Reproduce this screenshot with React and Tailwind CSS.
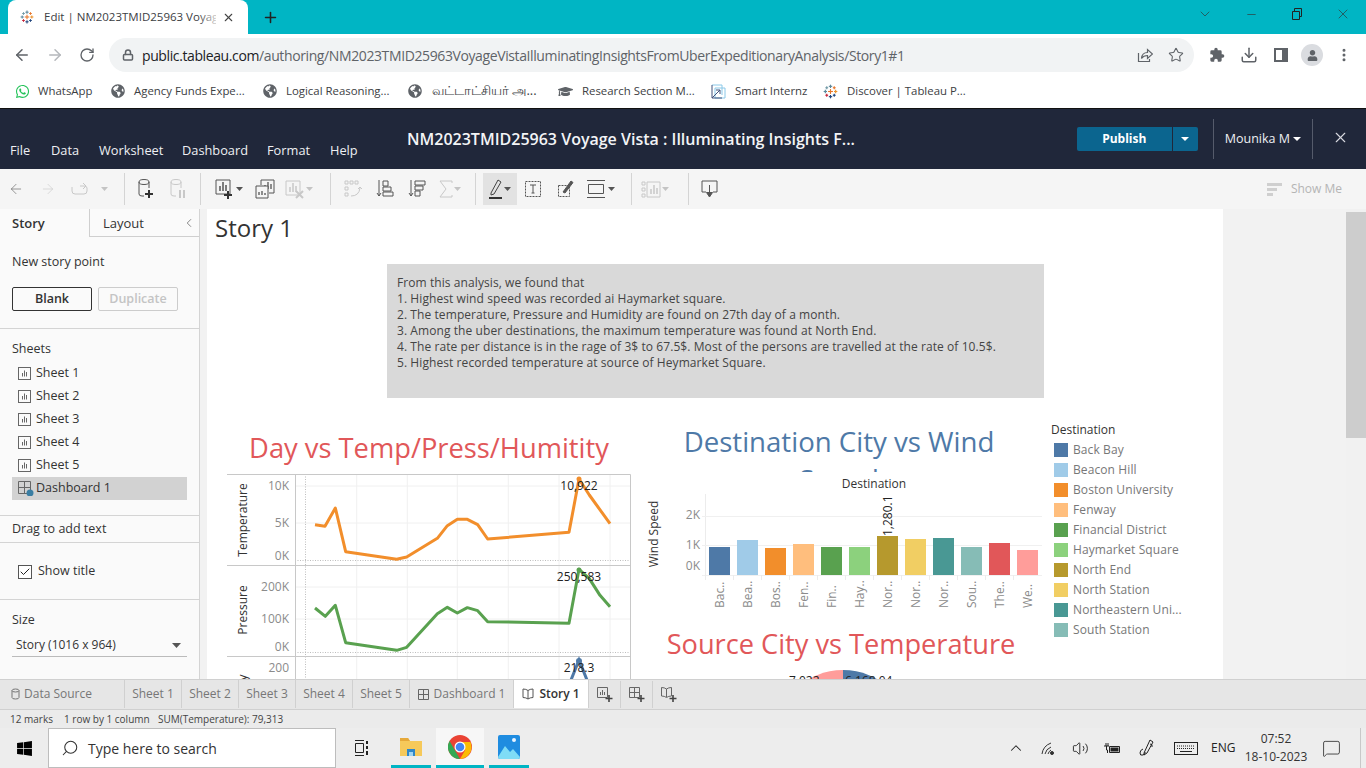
import React from "react";
import {
  ArrowLeft, ArrowRight, RotateCw, Lock, Star, Download, MoreVertical, Plus, X, Minus, ChevronDown,
  ChevronLeft, Check, Search, ChevronUp, Volume2, MessageSquare,
} from "lucide-react";
import { FaWhatsapp, FaGlobeAmericas, FaGraduationCap, FaUser, FaWindows } from "react-icons/fa";

const chromeFont = { fontFamily: '"Open Sans", "Noto Sans CJK SC", sans-serif' };

function TableauLogo({ size = 16 }) {
  const cross = (x, y, r, c) => (
    <g stroke={c} strokeWidth="1.2" key={`${x}-${y}`}>
      <line x1={x - r} y1={y} x2={x + r} y2={y} />
      <line x1={x} y1={y - r} x2={x} y2={y + r} />
    </g>
  );
  return (
    <svg width={size} height={size} viewBox="0 0 16 16">
      {cross(8, 8, 2.6, "#e8762b")}
      {cross(8, 2.5, 1.8, "#5b879b")}
      {cross(8, 13.5, 1.8, "#1f447c")}
      {cross(2.5, 8, 1.8, "#59879b")}
      {cross(13.5, 8, 1.8, "#eb912b")}
      {cross(4, 4, 1.5, "#7099a6")}
      {cross(12, 4, 1.5, "#e8762b")}
      {cross(4, 12, 1.5, "#c72035")}
      {cross(12, 12, 1.5, "#1f447c")}
    </svg>
  );
}

function BarGlyph({ className = "" }) {
  return (
    <svg width="13" height="13" viewBox="0 0 13 13" className={className} fill="none" stroke="#666">
      <rect x="0.5" y="0.5" width="12" height="12" />
      <path d="M4.5 9.5V6M6.5 9.5V3.5M8.5 9.5V5" />
    </svg>
  );
}

function Sep() {
  return <div className="w-px h-[32px] bg-[#d4d4d4]" />;
}

function Caret({ dim }) {
  return (
    <svg width="7" height="4" viewBox="0 0 7 4" className="ml-[1px] mt-[1px]">
      <path d="M0 0h7L3.5 4z" fill={dim ? "#c4c4c4" : "#555"} />
    </svg>
  );
}

function Tool({ children, w = "w-[32px]" }) {
  return <div className={`${w} h-[32px] flex items-center justify-center shrink-0`}>{children}</div>;
}

function Ico({ children, w = 20, h = 20 }) {
  return (
    <svg width={w} height={h} viewBox={`0 0 ${w} ${h}`} fill="none" stroke="currentColor" strokeWidth="1">
      {children}
    </svg>
  );
}

function Toolbar() {
  return (
    <div className="h-[40px] bg-[#f5f5f5] flex items-center relative text-[#555]">
      <Tool><ArrowLeft size={16} strokeWidth={1} className="text-[#666]" /></Tool>
      <Tool><ArrowRight size={16} strokeWidth={1} className="text-[#ccc]" /></Tool>
      <Tool>
        <Ico w={18} h={14}>
          <path d="M1 5v4q0 3 3 3h9q3 0 3-3V6q0-2-3-2H9" stroke="#c8c8c8" />
          <path d="M12 1l3 3-3 3" stroke="#c8c8c8" />
        </Ico>
      </Tool>
      <div className="w-[16px] flex justify-center"><Caret dim /></div>
      <div className="ml-[12px]"><Sep /></div>
      <div className="ml-[5px]" />
      <Tool>
        <Ico w={18} h={22}>
          <ellipse cx="7" cy="4" rx="5" ry="2.5" />
          <path d="M2 4v12q0 2 3 2h2M12 4v6" />
          <path d="M12 12v8M8 16h8" stroke="#333" strokeWidth="2" />
        </Ico>
      </Tool>
      <Tool>
        <Ico w={18} h={22}>
          <g stroke="#c8c8c8">
            <ellipse cx="7" cy="4" rx="5" ry="2.5" />
            <path d="M2 4v12q0 2 3 2h2M12 4v6" />
            <path d="M11 12v8M15 12v8" strokeWidth="2" />
          </g>
        </Ico>
      </Tool>
      <div className="ml-[6px]"><Sep /></div>
      <div className="ml-[8px]" />
      <Tool w="w-[40px]">
        <Ico w={20} h={22}>
          <path d="M1 2h14v14H1z" />
          <path d="M5 13V8M8 13V4M11 13V7" strokeWidth="1.5" />
          <path d="M13 13v8M9 17h8" stroke="#333" strokeWidth="2" />
        </Ico>
        <Caret />
      </Tool>
      <Tool>
        <Ico w={20} h={20}>
          <path d="M6 6V1h13v13h-5" />
          <path d="M10 10V6M13 10V3M16 10V5" strokeWidth="1.3" />
          <path d="M1 7h12v12H1z" fill="#f5f5f5" />
          <path d="M4 16v-3M7 16v-4M10 16v-2" strokeWidth="1.3" />
        </Ico>
      </Tool>
      <Tool w="w-[36px]">
        <Ico w={20} h={20}>
          <g stroke="#c8c8c8">
            <path d="M1 2h14v14H1z" />
            <path d="M5 13V8M8 13V4M11 13V7" strokeWidth="1.5" />
            <path d="M11 12l7 7M18 12l-7 7" strokeWidth="2" />
          </g>
        </Ico>
        <Caret dim />
      </Tool>
      <div className="ml-[13px]"><Sep /></div>
      <div className="ml-[6px]" />
      <Tool>
        <Ico w={20} h={20}>
          <g stroke="#c8c8c8">
            <path d="M2 2h3v3H2zM7 2h3v3H7zM12 2h3v3h-3zM2 8h3v3H2zM2 14h3v3H2z" />
            <path d="M8 17q8 0 9-8M15 10l2-2 2 2" />
          </g>
        </Ico>
      </Tool>
      <Tool>
        <Ico w={18} h={20}>
          <path d="M3 1v16M1 14l2 3 2-3" />
          <path d="M7 2h5v5H7zM7 8h8v4H7zM7 13h10v4H7z" />
        </Ico>
      </Tool>
      <Tool>
        <Ico w={18} h={20}>
          <path d="M3 1v16M1 14l2 3 2-3" />
          <path d="M7 2h10v4H7zM7 7h8v4H7zM7 12h5v5H7z" />
        </Ico>
      </Tool>
      <Tool w="w-[34px]">
        <Ico w={14} h={18}>
          <path d="M13 3V1H1l6 8-6 8h12v-2" stroke="#c8c8c8" />
        </Ico>
        <Caret dim />
      </Tool>
      <div className="ml-[8px]"><Sep /></div>
      <div className="ml-[7px] w-[34px] h-[32px] bg-[#e2e2e2] flex items-center justify-center text-[#444]">
        <Ico w={14} h={22}>
          <path d="M2 15L9 2l3 2-7 12-3 1z" />
          <path d="M0 20h13" stroke="#333" strokeWidth="2" />
        </Ico>
        <Caret />
      </div>
      <Tool>
        <Ico w={18} h={18}>
          <path d="M1.5 1.5h15v15h-15z" strokeDasharray="2 1" />
          <path d="M6 5h6M9 5v8M7.5 13h3" />
        </Ico>
      </Tool>
      <Tool w="w-[34px]">
        <Ico w={18} h={18}>
          <path d="M1.5 5.5h11v11h-11z" strokeDasharray="2 1" />
          <path d="M6 12L14 1l2 1.5L8 13z" fill="#555" />
        </Ico>
      </Tool>
      <Tool w="w-[36px]">
        <Ico w={20} h={20}>
          <path d="M0 1.5h18M0 18.5h18M1.5 5.5h15v9h-15z" />
        </Ico>
        <Caret />
      </Tool>
      <div className="ml-[12px]"><Sep /></div>
      <div className="ml-[4px]" />
      <Tool w="w-[38px]">
        <Ico w={20} h={18}>
          <g stroke="#c8c8c8">
            <path d="M1 2h3v3H1zM1 8h3v3H1zM1 14h3v3H1z" />
            <path d="M6 2h13v15H6z" />
            <path d="M10 14V9M13 14V5M16 14V8" strokeWidth="1.5" />
          </g>
        </Ico>
        <Caret dim />
      </Tool>
      <div className="ml-[14px]"><Sep /></div>
      <div className="ml-[5px]" />
      <Tool>
        <Ico w={18} h={18}>
          <path d="M5 12H1V1h15v11h-4" />
          <path d="M8.5 5v9" />
          <path d="M5.5 12.5h6L8.5 17z" fill="#555" />
        </Ico>
      </Tool>
      <div className="ml-auto mr-[24px] pt-[1px] flex items-center gap-[8px] text-[12px] text-[#b4b4b4]">
        <svg width="16" height="16" viewBox="0 0 16 16" fill="#cfcfcf">
          <rect x="0" y="2" width="15" height="3" />
          <rect x="0" y="7" width="10" height="3" />
          <rect x="0" y="12" width="6" height="3" />
        </svg>
        Show Me
      </div>
    </div>
  );
}

function ChromeTop() {
  return (
    <div style={chromeFont}>
      <div className="h-[34px] bg-[#00b5c4] flex items-end relative pl-[8px]">
        <div className="w-[240px] h-[34px] bg-white rounded-t-[8px] flex items-center pl-[12px] relative">
          <TableauLogo size={14} />
          <span className="ml-[10px] text-[11.5px] text-[#3c4043] w-[172px] overflow-hidden whitespace-nowrap">
            Edit | NM2023TMID25963 Voyage Vista
          </span>
          <div className="absolute left-[190px] top-0 w-[24px] h-full bg-gradient-to-r from-transparent to-white" />
          <X size={13} strokeWidth={2} className="ml-[6px] text-[#444]" />
        </div>
        <Plus size={17} strokeWidth={2.2} className="ml-[14px] mb-[8px] text-[#222]" />
        <div className="ml-auto h-[34px] flex items-start text-[#333]">
          <Tool w="w-[46px]"><ChevronDown size={16} strokeWidth={1} className="-mt-[4px]" /></Tool>
          <Tool w="w-[46px]"><Minus size={13} strokeWidth={1.2} className="-mt-[4px]" /></Tool>
          <Tool w="w-[46px]">
            <svg width="12" height="12" viewBox="0 0 12 12" fill="none" stroke="#222" className="-mt-[4px]">
              <path d="M1.5 3.5h7v8h-7zM3.5 3.5v-3h7v8h-2" />
            </svg>
          </Tool>
          <Tool w="w-[46px]"><X size={16} strokeWidth={1} className="-mt-[4px]" /></Tool>
        </div>
      </div>
      <div className="h-[42px] bg-white flex items-center text-[#5f6368]">
        <ArrowLeft size={18} strokeWidth={2} className="ml-[13px]" />
        <ArrowRight size={18} strokeWidth={2} className="ml-[15px] text-[#b5b8bc]" />
        <RotateCw size={16} strokeWidth={2} className="ml-[15px]" />
        <div className="ml-[14px] w-[1085px] h-[34px] rounded-full bg-[#f1f3f4] flex items-center pl-[13px]">
          <Lock size={12} strokeWidth={3} className="text-[#5f6368]" />
          <span className="ml-[8px] text-[14px] whitespace-nowrap text-[#5f6368] tracking-[-0.39px]">
            <span className="text-[#202124]">public.tableau.com</span>
            /authoring/NM2023TMID25963VoyageVistaIlluminatingInsightsFromUberExpeditionaryAnalysis/Story1#1
          </span>
          <div className="ml-auto mr-[10px] flex items-center gap-[15px]">
            <svg width="16" height="16" viewBox="0 0 16 16" fill="none" stroke="#5f6368" strokeWidth="1.2">
              <path d="M1.500 6v8.500h11V12" />
              <path d="M4.500 11.500q0.500-6 6-6V2.500l5 4.500-5 4.500V8.500q-4 0-6 3z" />
            </svg>
            <Star size={16} strokeWidth={1.6} />
          </div>
        </div>
        <svg width="16" height="16" viewBox="0 0 24 24" fill="#5f6368" className="ml-[15px]">
          <path d="M20.500 11H19V7a2 2 0 0 0-2-2h-4V3.500a2.500 2.500 0 0 0-5 0V5H4a2 2 0 0 0-2 2v3.800h1.500a2.700 2.700 0 0 1 0 5.400H2V20a2 2 0 0 0 2 2h3.800v-1.500a2.700 2.700 0 0 1 5.400 0V22H17a2 2 0 0 0 2-2v-4h1.500a2.500 2.500 0 0 0 0-5z" />
        </svg>
        <Download size={18} strokeWidth={2} className="ml-[15px]" />
        <svg width="14" height="14" viewBox="0 0 14 14" className="ml-[16px]">
          <path d="M1 1h12v12H1z" fill="none" stroke="#5f6368" strokeWidth="2" />
          <rect x="8" y="1" width="5" height="12" fill="#5f6368" />
        </svg>
        <div className="ml-[13px] w-[22px] h-[22px] rounded-full bg-[#dadce0] flex items-center justify-center">
          <FaUser size={11} className="text-[#5f6368]" />
        </div>
        <MoreVertical size={16} strokeWidth={2.5} className="ml-[13px]" />
      </div>
      <div className="h-[32px] bg-white flex items-center pl-[15px] pb-[2px] text-[11.4px] text-[#3c4043] whitespace-nowrap">
        <FaWhatsapp size={15} className="text-[#25c35a]" />
        <span className="ml-[8px] w-[73px]">WhatsApp</span>
        <FaGlobeAmericas size={14} className="text-[#5f6368]" />
        <span className="ml-[9px] w-[129px]">Agency Funds Expe...</span>
        <FaGlobeAmericas size={14} className="text-[#5f6368]" />
        <span className="ml-[9px] w-[122px]">Logical Reasoning...</span>
        <FaGlobeAmericas size={14} className="text-[#5f6368]" />
        <span className="ml-[10px] w-[126px] text-[13px]">வட்டாட்சியர் அ...</span>
        <FaGraduationCap size={15} className="text-[#5f6368]" />
        <span className="ml-[9px] w-[129px]">Research Section M...</span>
        <svg width="15" height="16" viewBox="0 0 15 16" fill="none">
          <path d="M1 2h10v10" stroke="#8ac8e8" />
          <path d="M4 5h10v10H4z" stroke="#8ac8e8" />
          <path d="M1 2v13h10M1 15l8-8M5 7h4v4" stroke="#40507a" />
        </svg>
        <span className="ml-[9px] w-[88px]">Smart Internz</span>
        <TableauLogo size={15} />
        <span className="ml-[9px]">Discover | Tableau P...</span>
      </div>
    </div>
  );
}

function AppHeader() {
  const menu = [
    ["File", "w-[41px]"],
    ["Data", "w-[48px]"],
    ["Worksheet", "w-[83px]"],
    ["Dashboard", "w-[85px]"],
    ["Format", "w-[63px]"],
    ["Help", "w-[40px]"],
  ];
  return (
    <div className="h-[61px] bg-[#20273a] border-t border-[#111] flex text-white relative">
      <div className="flex items-end pl-[10px] pb-[9px] text-[12.8px] text-[#eef0f3]">
        {menu.map(([m, w]) => (
          <span key={m} className={w}>{m}</span>
        ))}
      </div>
      <div className="ml-[37px] pt-[18px] text-[16px] font-semibold text-[#f3f4f6] whitespace-nowrap">
        NM2023TMID25963 Voyage Vista : Illuminating Insights F...
      </div>
      <div className="ml-auto flex items-start pt-[18px] pr-[15px]">
        <div className="h-[24px] w-[95px] bg-[#0b658f] flex items-center justify-center text-[12px] font-bold rounded-l-[2px]">
          Publish
        </div>
        <div className="h-[24px] w-[25px] ml-px bg-[#0b658f] flex items-center justify-center rounded-r-[2px]">
          <svg width="8" height="4" viewBox="0 0 8 4"><path d="M0 0h8L4 4z" fill="#fff" /></svg>
        </div>
        <div className="ml-[15px] -mt-[8px] w-px h-[40px] bg-[#555b6b]" />
        <div className="ml-[11px] mt-[3px] text-[12.5px] flex items-center gap-[3px] whitespace-nowrap text-[#eef0f3]">
          Mounika M
          <svg width="8" height="4" viewBox="0 0 8 4"><path d="M0 0h8L4 4z" fill="#fff" /></svg>
        </div>
        <div className="ml-[11px] -mt-[8px] w-px h-[40px] bg-[#555b6b]" />
        <X size={17} strokeWidth={1.6} className="ml-[19px] mt-[2px] mr-[2px] text-[#d8dae0]" />
      </div>
    </div>
  );
}

function Sidebar() {
  const sheets = ["Sheet 1", "Sheet 2", "Sheet 3", "Sheet 4", "Sheet 5"];
  return (
    <div className="w-[200px] shrink-0 h-full bg-[#fafafa] border-r border-[#d4d4d4] text-[12.5px] text-[#333] overflow-hidden">
      <div className="h-[28px] flex">
        <div className="w-[89px] pl-[12px] pt-[5px] font-semibold text-[13px]">Story</div>
        <div className="flex-1 border-l border-b border-[#cfcfcf] pl-[13px] pt-[5px] text-[13px] relative">
          Layout
          <ChevronLeft size={14} strokeWidth={1.2} className="absolute right-[3px] top-[7px] text-[#555]" />
        </div>
      </div>
      <div className="h-[92px] border-b border-[#d4d4d4] px-[12px] pt-[16px]">
        <div className="leading-[17px]">New story point</div>
        <div className="flex gap-[6px] mt-[17px]">
          <div className="w-[80px] h-[24px] border border-[#333] rounded-[2px] pt-[1px] flex items-center justify-center font-semibold">
            Blank
          </div>
          <div className="w-[80px] h-[24px] border border-[#ccc] rounded-[2px] pt-[1px] flex items-center justify-center font-semibold text-[#c4c4c4]">
            Duplicate
          </div>
        </div>
      </div>
      <div className="h-[187px] border-b border-[#d4d4d4] pt-[11px]">
        <div className="pl-[12px] leading-[17px]">Sheets</div>
        <div className="mt-[5px]">
          {sheets.map((s) => (
            <div key={s} className="h-[23px] flex items-center pl-[18px] gap-[5px]">
              <BarGlyph />
              {s}
            </div>
          ))}
          <div className="ml-[12px] w-[175px] h-[23px] bg-[#d2d2d2] flex items-center pl-[6px] gap-[2px] relative">
            <svg width="16" height="15" viewBox="0 0 16 15" fill="none" stroke="#666">
              <path d="M0.500 0.500h12v12h-12zM6.500 0.500v12M0.500 6.500h12" />
              <circle cx="12" cy="12" r="3.500" fill="#3a7ea3" stroke="none" />
            </svg>
            Dashboard 1
          </div>
        </div>
      </div>
      <div className="h-[27px] border-b border-[#d4d4d4] pl-[12px] pt-[2px] flex items-center">Drag to add text</div>
      <div className="h-[57px] border-b border-[#d4d4d4] pl-[18px] pt-[2px] flex items-center gap-[6px]">
        <div className="w-[14px] h-[14px] border border-[#555] flex items-center justify-center bg-white">
          <Check size={12} strokeWidth={2} className="text-[#222]" />
        </div>
        Show title
      </div>
      <div className="pt-[11px] px-[12px]">
        <div className="leading-[17px]">Size</div>
        <div className="mt-[7px] w-[175px] h-[22px] border-b border-[#bbb] pl-[4px] pr-[6px] flex items-center justify-between text-[12px]">
          Story (1016 x 964)
          <svg width="9" height="5" viewBox="0 0 9 5"><path d="M0 0h9L4.500 5z" fill="#555" /></svg>
        </div>
      </div>
    </div>
  );
}

const toLine = (arr) => arr.map(([x, y]) => `${210 + x / 3},${430 + y / 3}`).join(" ");

const tempPts = [[315,284],[345,289],[376,234],[407,365],[560,388],[590,381],[682,325],[712,287],[742,268],[772,268],[803,284],[833,327],[1077,307],[1107,147],[1138,195],[1200,281]];
const pressPts = [[315,534],[346,559],[376,526],[407,638],[560,661],[590,652],[682,551],[712,532],[742,549],[772,533],[803,542],[833,575],[1077,580],[1107,418],[1138,446],[1170,496],[1200,530]];

function LineCharts() {
  const vgrid = [356.7, 407.3, 457.3, 508.3, 559, 610];
  const tick = { fontSize: 12, fill: "#8b8b8b", textAnchor: "end" };
  const axis = { fontSize: 12, fill: "#333", textAnchor: "middle" };
  return (
    <svg width="404" height="206" viewBox="227 474 404 206" className="block ml-[20px]" style={{ fontFamily: '"Open Sans", sans-serif' }}>
      {vgrid.map((x) => (
        <line key={x} x1={x} x2={x} y1="474" y2="680" stroke="#f0f0f0" />
      ))}
      {[486, 523, 587, 619].map((y) => (
        <line key={y} x1="295" x2="630" y1={y} y2={y} stroke="#f0f0f0" />
      ))}
      <line x1="305.500" x2="305.500" y1="474" y2="680" stroke="#bdbdbd" strokeDasharray="1 1.500" />
      <line x1="295" x2="630" y1="560.500" y2="560.500" stroke="#bdbdbd" strokeDasharray="1 1.500" />
      <line x1="295" x2="630" y1="652.500" y2="652.500" stroke="#bdbdbd" strokeDasharray="1 1.500" />
      <path d="M227 474.500H630.500V680M227 565.500H630M227 656.500H630M295.500 474V680" fill="none" stroke="#c8c8c8" />
      <text x="289" y="490" {...tick}>10K</text>
      <text x="289" y="527" {...tick}>5K</text>
      <text x="289" y="560" {...tick}>0K</text>
      <text x="289" y="591" {...tick}>200K</text>
      <text x="289" y="623" {...tick}>100K</text>
      <text x="289" y="651" {...tick}>0K</text>
      <text x="289" y="672" {...tick}>200</text>
      <text transform="translate(247 520) rotate(-90)" {...axis}>Temperature</text>
      <text transform="translate(247 610) rotate(-90)" {...axis}>Pressure</text>
      <text transform="translate(247 700) rotate(-90)" {...axis}>Humidity</text>
      <polyline points={toLine(tempPts)} fill="none" stroke="#f28e2b" strokeWidth="3" strokeLinejoin="round" />
      <circle cx="579" cy="479" r="2.500" fill="#f28e2b" />
      <polyline points={toLine(pressPts)} fill="none" stroke="#59a14f" strokeWidth="3" strokeLinejoin="round" />
      <circle cx="579" cy="570" r="2.500" fill="#59a14f" />
      <polyline points="571,680 579,660 587,680" fill="none" stroke="#4e79a7" strokeWidth="3" />
      <circle cx="579" cy="661" r="3" fill="#4e79a7" />
      <text x="579" y="490" fontSize="12" fill="#222" textAnchor="middle">10,922</text>
      <text x="579" y="581" fontSize="12" fill="#222" textAnchor="middle">250,583</text>
      <text x="579" y="672" fontSize="12" fill="#222" textAnchor="middle">218.3</text>
    </svg>
  );
}

const cities = [
  { label: "Bac..", legend: "Back Bay", color: "#4e79a7", top: 381 },
  { label: "Bea..", legend: "Beacon Hill", color: "#a0cbe8", top: 360 },
  { label: "Bos..", legend: "Boston University", color: "#f28e2b", top: 384 },
  { label: "Fen..", legend: "Fenway", color: "#ffbe7d", top: 372 },
  { label: "Fin..", legend: "Financial District", color: "#59a14f", top: 381 },
  { label: "Hay..", legend: "Haymarket Square", color: "#8cd17d", top: 381 },
  { label: "Nor..", legend: "North End", color: "#b6992d", top: 348 },
  { label: "Nor..", legend: "North Station", color: "#f1ce63", top: 357 },
  { label: "Nor..", legend: "Northeastern Uni...", color: "#499894", top: 354 },
  { label: "Sou..", legend: "South Station", color: "#86bcb6", top: 381 },
  { label: "The..", legend: "The Fens", color: "#e15759", top: 369 },
  { label: "We..", legend: "West End", color: "#ff9d9a", top: 390 },
];

function BarChart() {
  return (
    <svg width="405" height="140" viewBox="640 477 405 140" className="block mt-[5px]" style={{ fontFamily: '"Open Sans", sans-serif' }}>
      <text x="875" y="488" fontSize="12" fill="#333" textAnchor="middle">Destination</text>
      <line x1="706.500" x2="706.500" y1="494" y2="575" stroke="#ececec" />
      {[516, 545, 575].map((y) => (
        <line key={y} x1="703" x2="1043" y1={y + 0.500} y2={y + 0.500} stroke="#f0f0f0" />
      ))}
      <text x="701" y="519" fontSize="12" fill="#8b8b8b" textAnchor="end">2K</text>
      <text x="701" y="549" fontSize="12" fill="#8b8b8b" textAnchor="end">1K</text>
      <text x="701" y="570" fontSize="12" fill="#8b8b8b" textAnchor="end">0K</text>
      <text transform="translate(659 534) rotate(-90)" fontSize="12" fill="#333" textAnchor="middle">Wind Speed</text>
      {cities.map((c, i) => {
        const x = 710 + i * 28;
        const y = 420 + c.top / 3;
        return (
          <g key={c.legend}>
            <rect x={x} y={y} width="21" height={575 - y} fill={c.color} />
            <line x1={x - 3.500} x2={x - 3.500} y1="575" y2="580" stroke="#ececec" />
            <text transform={`translate(${x + 15} 608) rotate(-90)`} fontSize="12" fill="#8b8b8b">{c.label}</text>
          </g>
        );
      })}
      <text transform="translate(893 536) rotate(-90)" fontSize="12" fill="#222">1,280.1</text>
    </svg>
  );
}

function Legend() {
  return (
    <div className="pl-[3px] pt-[22px] h-[245px] overflow-hidden text-[12px] leading-[20px] whitespace-nowrap">
      <div className="text-[#333] -ml-[3px]">Destination</div>
      {cities.slice(0, 10).map((c) => (
        <div key={c.legend} className="h-[20px] flex items-center gap-[5px] text-[#777] tracking-[0.1px]">
          <div className="w-[14px] h-[14px] shrink-0" style={{ backgroundColor: c.color }} />
          {c.legend}
        </div>
      ))}
      <div className="mt-[3px] w-[14px] h-[2px] border-t border-x border-[#e15759]" />
    </div>
  );
}

function Story() {
  const notes = [
    "From this analysis, we found that",
    "1. Highest wind speed was recorded ai Haymarket square.",
    "2. The temperature, Pressure and Humidity are found on 27th day of a month.",
    "3. Among the uber destinations, the maximum temperature was found at North End.",
    "4. The rate per distance is in the rage of 3$ to 67.5$. Most of the persons are travelled at the rate of 10.5$.",
    "5. Highest recorded temperature at source of Heymarket Square.",
  ];
  return (
    <div className="w-[1016px] ml-[7px] h-full bg-white overflow-hidden shrink-0" style={{ fontFamily: '"Open Sans", sans-serif' }}>
      <div className="pl-[8px] pt-[3px] h-[55px] text-[24px] leading-[32px] text-[#333]">Story 1</div>
      <div className="ml-[180px] w-[657px] h-[134px] bg-[#d9d9d9] pl-[10px] pt-[11px] text-[12px] leading-[16px] tracking-[0.08px] text-[#444] whitespace-nowrap">
        {notes.map((n) => (
          <div key={n}>{n}</div>
        ))}
      </div>
      <div className="flex">
        <div className="w-[432px] shrink-0 pt-[30px]">
          <div className="ml-[20px] w-[404px] text-center text-[27.3px] leading-[40px] h-[46px] text-[#e15759] whitespace-nowrap">
            Day vs Temp/Press/Humitity
          </div>
          <LineCharts />
        </div>
        <div className="w-[412px] shrink-0">
          <div className="h-[74px] pt-[24px] overflow-hidden">
            <div className="ml-[30px] w-[340px] text-center text-[27.6px] leading-[38px] text-[#4e79a7]">
              Destination City vs Wind Speed
            </div>
          </div>
          <BarChart />
          <div className="w-[404px] text-center text-[27.2px] leading-[36px] mt-[9px] text-[#e15759] whitespace-nowrap">
            Source City vs Temperature
          </div>
          <div className="relative h-[20px] mt-[8px]">
            <svg width="404" height="20" viewBox="637 670 404 20" className="block">
              <path d="M841 670a68 68 0 0 0-68 68h68z" fill="#ff9d9a" />
              <path d="M841 670a68 68 0 0 1 68 68h-68z" fill="#4e79a7" />
            </svg>
            <span className="absolute left-[150px] top-[3px] text-[12px] leading-[16px] text-[#222]">7,022</span>
            <span className="absolute left-[206px] top-[3px] text-[12px] leading-[16px] text-[#222]">6,168.04</span>
          </div>
        </div>
        <div className="flex-1"><Legend /></div>
      </div>
    </div>
  );
}

function BottomTabs() {
  const sheets = ["Sheet 1", "Sheet 2", "Sheet 3", "Sheet 4", "Sheet 5"];
  return (
    <div style={chromeFont}>
      <div className="h-[31px] bg-[#e6e6e6] border-t border-b border-[#d0d0d0] flex text-[12px] text-[#777] pb-[1px]">
        <div className="w-[125px] pl-[11px] flex items-center gap-[4px] border-r border-[#d0d0d0]">
          <svg width="9" height="12" viewBox="0 0 9 12" fill="none" stroke="#777">
            <ellipse cx="4.500" cy="2.500" rx="3.500" ry="1.500" />
            <path d="M1 2.500v7q0 1.500 3.500 1.500T8 9.500v-7" />
          </svg>
          Data Source
        </div>
        {sheets.map((s) => (
          <div key={s} className="w-[57px] flex items-center justify-center border-r border-[#d0d0d0]">{s}</div>
        ))}
        <div className="w-[104px] flex items-center justify-center gap-[5px] border-r border-[#d0d0d0]">
          <svg width="11" height="11" viewBox="0 0 11 11" fill="none" stroke="#666">
            <path d="M0.500 0.500h10v10h-10zM5.500 0.500v10M0.500 5.500h10" />
          </svg>
          Dashboard 1
        </div>
        <div className="w-[75px] bg-white flex items-center justify-center gap-[5px] text-[#333] font-semibold border-r border-[#d0d0d0]">
          <svg width="12" height="12" viewBox="0 0 12 12" fill="none" stroke="#555">
            <path d="M6 2.500Q4 1 1 1v8.500q3 0 5 1.500 2-1.500 5-1.500V1Q8 1 6 2.500zM6 2.500V11" />
          </svg>
          Story 1
        </div>
        {[0, 1, 2].map((i) => (
          <div key={i} className="w-[32px] mt-[1px] flex items-center justify-center border-r border-[#d0d0d0] last:border-r-0">
            <svg width="16" height="16" viewBox="0 0 16 16" fill="none" stroke="#666">
              {i === 0 && <path d="M0.500 0.500h10v10h-10zM3.500 8V5M5.500 8V3M7.500 8V5" />}
              {i === 1 && <path d="M0.500 0.500h10v10h-10zM5.500 0.500v10M0.500 5.500h10" />}
              {i === 2 && <path d="M5.500 2Q3.500 0.500 0.500 0.500V9q3 0 5 1.500 2-1.500 5-1.500V0.500Q7.500 0.500 5.500 2zM5.500 2v8" />}
              <path d="M12 8v7M8.500 11.500h7" stroke="#444" strokeWidth="1.600" />
            </svg>
          </div>
        ))}
      </div>
      <div className="h-[18px] bg-[#ebebeb] flex items-center text-[10px] text-[#444] whitespace-nowrap">
        <span className="ml-[10px] w-[54px]">12 marks</span>
        <span className="w-[94px]">1 row by 1 column</span>
        <span>SUM(Temperature): 79,313</span>
      </div>
    </div>
  );
}

function Taskbar() {
  return (
    <div className="h-[40px] bg-[#ededed] flex items-stretch relative text-[#222]" style={chromeFont}>
      <div className="w-[48px] flex items-center justify-center">
        <FaWindows size={17} className="text-black" />
      </div>
      <div className="w-[288px] bg-white border border-[#bdbdbd] flex items-center pl-[12px] gap-[9px] text-[14px] text-[#333]">
        <Search size={18} strokeWidth={1.4} className="-scale-x-100" />
        Type here to search
      </div>
      <div className="w-[50px] flex items-center justify-center">
        <svg width="16" height="16" viewBox="0 0 16 16" fill="none" stroke="#222" className="ml-[1px]">
          <path d="M1 0.500h9M1 15.500h9M1.500 3.500h8v9h-8z" />
          <path d="M13 1v3M13 6v3M13 11v4" strokeWidth="2" />
        </svg>
      </div>
      <div className="w-[5px]" />
      <div className="w-[40px] border-b-[3px] border-[#00b5c4] flex items-center justify-center">
        <svg width="22" height="20" viewBox="0 0 22 20">
          <path d="M0 1h8l2 3h12v15H0z" fill="#f6c95a" />
          <path d="M0 1h8l2 3H0z" fill="#e6a93a" />
          <path d="M7 12h8v7H7z" fill="#2f87c8" />
          <path d="M9 15h4v4H9z" fill="#9fd4f2" />
        </svg>
      </div>
      <div className="w-[48px] ml-[5px] bg-[#f7f7f7] border-b-[3px] border-[#00b5c4] flex items-center justify-center">
        <svg width="24" height="24" viewBox="0 0 24 24">
          <circle cx="12" cy="12" r="12" fill="#ea4335" />
          <path d="M12 24A12 12 0 0 1 1.600 6L7 15.500 12 24z" fill="#34a853" />
          <path d="M12 24l5.200-9L12 7h10.400A12 12 0 0 1 12 24z" fill="#fbbc04" />
          <circle cx="12" cy="12" r="5.500" fill="#fff" />
          <circle cx="12" cy="12" r="4.300" fill="#4285f4" />
        </svg>
      </div>
      <div className="w-[40px] ml-[5px] border-b-[3px] border-[#00b5c4] flex items-center justify-center">
        <svg width="22" height="24" viewBox="0 0 22 24">
          <rect width="22" height="24" rx="2" fill="#1f8ce0" />
          <circle cx="16" cy="5" r="2" fill="#e8f4ff" />
          <path d="M0 22l7-11 5 6 3-3 7 8v0a2 2 0 0 1-2 2H2a2 2 0 0 1-2-2z" fill="#7fdcf6" />
        </svg>
      </div>
      <div className="ml-auto flex items-center text-[#222]">
        <ChevronUp size={18} strokeWidth={1.4} />
        <svg width="16" height="14" viewBox="0 0 16 14" fill="none" stroke="#333" className="ml-[16px]">
          <path d="M1 13Q2 5 10 2M4 13q1-5 6-7M7 13q1-3 3-4" />
          <circle cx="11" cy="12" r="1.500" fill="#333" />
        </svg>
        <Volume2 size={17} strokeWidth={1.3} className="ml-[15px]" />
        <svg width="16" height="11" viewBox="0 0 16 11" fill="none" stroke="#222" className="ml-[15px]">
          <path d="M5.500 3.500h10v6h-10z" />
          <rect x="7" y="5" width="7" height="3" fill="#222" />
          <path d="M0 3h5M2 0v3M4 0v3M2.500 3v4h1v3" />
        </svg>
        <svg width="16" height="18" viewBox="0 0 16 18" fill="none" stroke="#222" className="ml-[19px]">
          <path d="M5 14L11 1l3 2-6 11-3 2zM4 10Q1 11 1 14t3 2 2-3M11 5q3 0 2 3" />
        </svg>
        <svg width="24" height="13" viewBox="0 0 24 13" fill="none" stroke="#222" className="ml-[19px]">
          <rect x="0.500" y="0.500" width="23" height="12" />
          <path d="M3 4h18M3 6.500h18" strokeDasharray="1 1" />
          <path d="M6 9.500h12" />
        </svg>
        <span className="ml-[13px] text-[12px] w-[26px]">ENG</span>
        <div className="ml-[7px] w-[64px] text-center text-[12px] leading-[18px] text-[#333]">
          <div>07:52</div>
          <div>18-10-2023</div>
        </div>
        <MessageSquare size={19} strokeWidth={1} className="ml-[14px]" />
        <div className="ml-[19px] w-px h-full bg-[#c8c8c8]" />
        <div className="w-[5px]" />
      </div>
    </div>
  );
}

export default function App() {
  return (
    <div className="w-[1366px] h-[768px] overflow-hidden flex flex-col" style={chromeFont}>
      <ChromeTop />
      <AppHeader />
      <Toolbar />
      <div className="h-[471px] flex bg-[#f2f2f2] overflow-hidden">
        <Sidebar />
        <Story />
        <div className="ml-auto w-[20px] h-full bg-[#f1f1f1] pt-[3px]">
          <div className="h-[226px] bg-[#cdcdcd]" />
        </div>
      </div>
      <BottomTabs />
      <Taskbar />
    </div>
  );
}
